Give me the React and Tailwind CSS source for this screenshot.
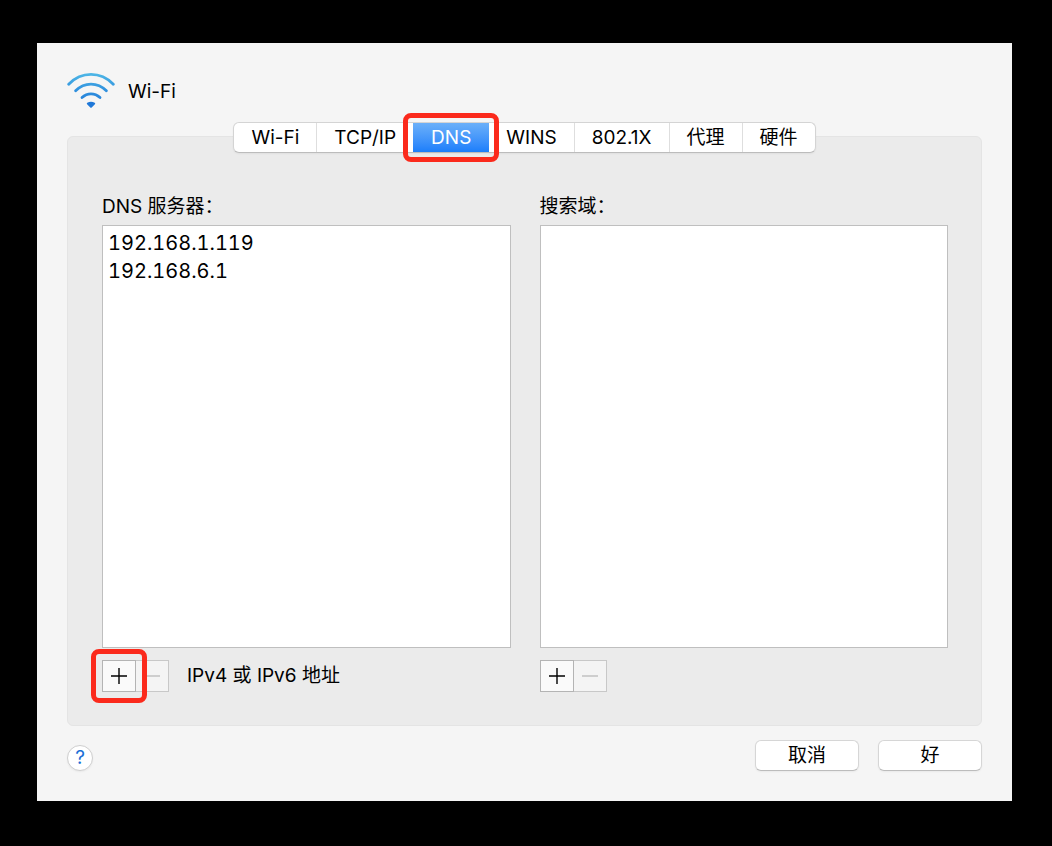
import React, { useState } from 'react'

const TABS = ['Wi-Fi', 'TCP/IP', 'DNS', 'WINS', '802.1X', '代理', '硬件']

const WifiIcon = () => (
  <svg viewBox="0 0 48 36" className="w-12 h-9" fill="none" aria-hidden="true">
    <defs>
      <linearGradient id="wifi" x1="0" y1="0" x2="0" y2="36" gradientUnits="userSpaceOnUse">
        <stop offset="0" stopColor="#4fb8e6" />
        <stop offset="0.5" stopColor="#2f8fdd" />
        <stop offset="1" stopColor="#1f78d8" />
      </linearGradient>
    </defs>
    <g stroke="url(#wifi)" strokeWidth="2.8" strokeLinecap="round">
      <path d="M1.7 11.2C14.5-1.8 33.500-1.800 46.300 11.200" />
      <path d="M8.600 17.800C17.500 8.800 30.500 8.800 39.400 17.800" />
      <path d="M15 24.600C20.300 19.500 27.700 19.500 33 24.600" />
    </g>
    <path d="M20.800 30.600C22.500 29.600 25.500 29.600 27.200 30.600L24 33.800Z" fill="#1f78d8" stroke="#1f78d8" strokeWidth="2" strokeLinejoin="round" />
  </svg>
)

const Highlight = ({ className }) => (
  <span
    className={`absolute z-20 rounded-lg border-5 border-[#fb2a1c] pointer-events-none ${className}`}
  />
)

const Sign = ({ plus }) => (
  <svg viewBox="0 0 18 18" className="w-[18px] h-[18px]" stroke="currentColor" strokeWidth="1.4" aria-hidden="true">
    <path d={plus ? 'M1 9H17M9 1V17' : 'M1 9H17'} />
  </svg>
)

const AddRemove = ({ label, marked }) => (
  <div className="flex">
    <div className="relative">
      <button
        type="button"
        aria-label={`添加${label}`}
        className="flex items-center justify-center w-[34px] h-8 bg-[#fafafa] border border-[#b4b4b4] text-black"
      >
        <Sign plus />
      </button>
      {marked && <Highlight className="-inset-[11px]" />}
    </div>
    <button
      type="button"
      disabled
      aria-label={`移除${label}`}
      className="flex items-center justify-center w-[33px] h-8 bg-[#f4f4f4] border border-l-0 border-[#c8c8c8] text-[#bdbdbd]"
    >
      <Sign />
    </button>
  </div>
)

const ListColumn = ({ id, title, items, marked, hint }) => (
  <div className="flex flex-col">
    <h2 id={id} className="h-6 leading-6">{title}</h2>
    <ul
      aria-labelledby={id}
      className="flex-1 mt-1.5 px-[5px] py-[3px] bg-white border border-[#bfbfbf] text-xl leading-7 tabular-nums"
    >
      {items.map((item) => (
        <li key={item}>{item}</li>
      ))}
    </ul>
    <div className="flex items-center gap-[18px] mt-3">
      <AddRemove label={title.replace('：', '')} marked={marked} />
      {hint && <span className="leading-6">{hint}</span>}
    </div>
  </div>
)

const PushButton = ({ children }) => (
  <button
    type="button"
    className="w-[104px] h-[31px] rounded-md bg-white border border-[#d6d6d6] border-b-[#bcbcbc] shadow-xs leading-6"
  >
    {children}
  </button>
)

const App = () => {
  const [active, setActive] = useState('DNS')

  return (
    <div className="min-h-screen flex flex-col bg-black pl-[37px] pr-10 pt-[43px] pb-[45px] font-['Inter','Noto_Sans_CJK_SC',sans-serif] text-[19px] text-black">
      <main className="flex-1 flex flex-col bg-[#f5f5f5] p-[30px]">
        {/* Service title */}
        <header className="flex items-center gap-[13px]">
          <WifiIcon />
          <h1 className="pt-0.5">Wi-Fi</h1>
        </header>

        {/* Tabs, sitting on the top edge of the panel */}
        <div className="relative z-10 flex justify-center mt-[13px] -mb-[17px]">
          <div
            role="tablist"
            className="flex h-[31px] rounded-md bg-white border border-[#d4d4d4] border-b-[#bcbcbc] shadow-xs"
          >
            {TABS.map((tab, i) => (
              <div key={tab} className={`relative flex ${i > 0 && i !== 2 && i !== 3 ? 'border-l border-[#dedede]' : ''}`}>
                <button
                  type="button"
                  role="tab"
                  aria-selected={tab === active}
                  onClick={() => setActive(tab)}
                  className={`leading-6 ${
                    tab === active
                      ? 'px-[18px] bg-linear-to-b from-[#6bb0f9] to-[#1a7efb] text-white'
                      : 'px-[17px] rounded-md'
                  }`}
                >
                  {tab}
                </button>
                {tab === 'DNS' && <Highlight className="-inset-[10px]" />}
              </div>
            ))}
          </div>
        </div>

        {/* DNS panel */}
        <section className="flex-1 grid grid-cols-2 gap-[29px] rounded-md bg-[#ebebeb] border border-[#e4e4e4] pl-[34px] pr-[33px] pt-[58px] pb-[33px]">
          <ListColumn
            id="dns-servers"
            title="DNS 服务器："
            items={['192.168.1.119', '192.168.6.1']}
            hint="IPv4 或 IPv6 地址"
            marked
          />
          <ListColumn id="search-domains" title="搜索域：" items={[]} />
        </section>

        <footer className="flex items-center justify-between mt-3.5">
          <button
            type="button"
            aria-label="帮助"
            className="w-[26px] h-[26px] mt-1 rounded-full bg-white border border-[#cfcfcf] shadow-xs leading-6 text-[#1a6fd6]"
          >
            ?
          </button>
          <div className="flex gap-[19px]">
            <PushButton>取消</PushButton>
            <PushButton>好</PushButton>
          </div>
        </footer>
      </main>
    </div>
  )
}

export default App
